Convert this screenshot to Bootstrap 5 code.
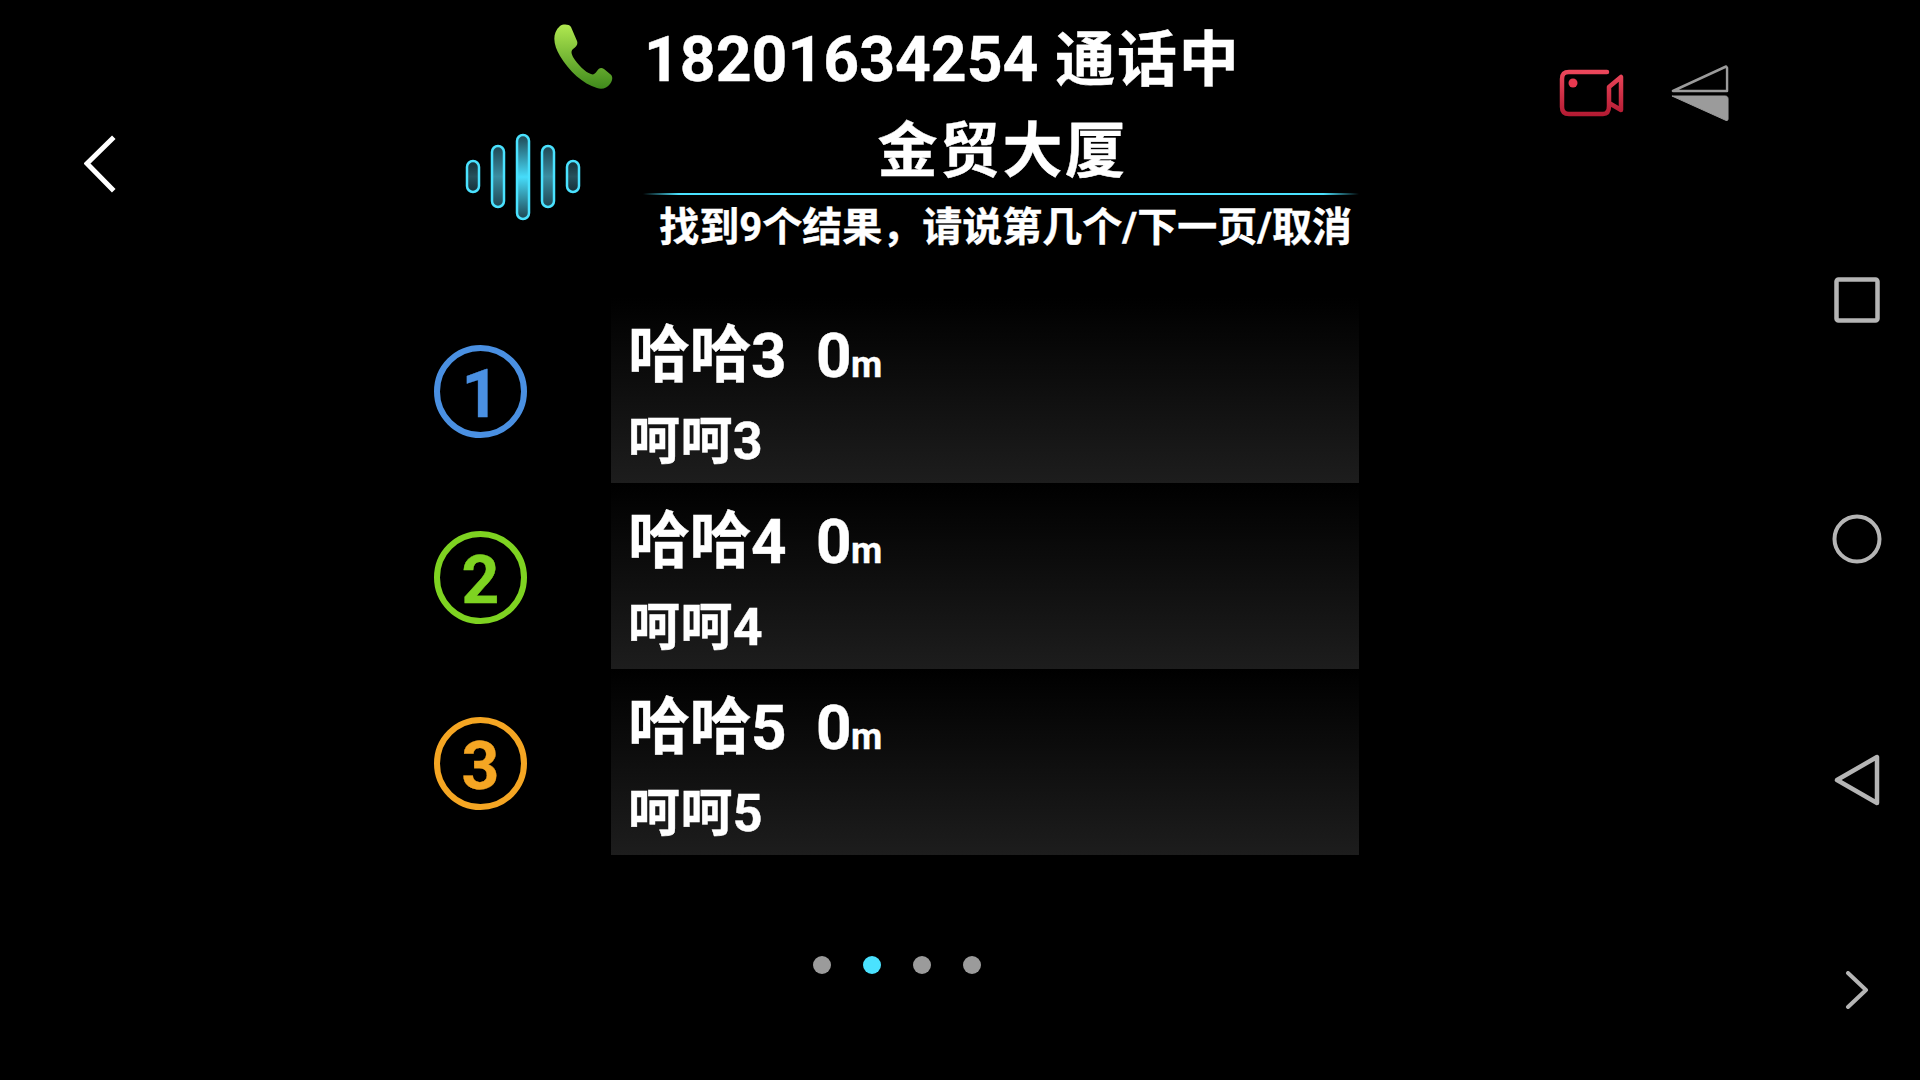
<!DOCTYPE html>
<html lang="zh">
<head>
<meta charset="utf-8">
<title>通话中</title>
<link href="https://cdn.jsdelivr.net/npm/bootstrap@5.3.0/dist/css/bootstrap.min.css" rel="stylesheet">
<style>
html,body{height:1080px;overflow:hidden;background:#000;}
body{font-family:Roboto,"Noto Sans CJK SC",sans-serif;font-weight:700;color:#fff;-webkit-text-stroke:.4px currentColor;}
.stage{width:1920px;height:1080px;background:#000;}
.left-rail{width:430px;padding:135px 0 0 84px;}
.center-col{width:929px;}
.top-line{height:120px;padding-left:123px;font-size:60px;line-height:120px;letter-spacing:1.8px;white-space:pre;}
.top-digits{font-size:62.500px;letter-spacing:0;}
.phone-ico{width:60px;height:66px;margin-right:31px;margin-top:-6px;}
.second-block{height:134px;padding-left:35px;}
.wave-ico{width:116px;height:88px;margin-top:13px;margin-right:64px;}
.info-col{width:712px;margin-top:-3px;}
.place{font-size:60px;line-height:70px;height:76px;text-align:center;letter-spacing:2.500px;padding-left:3px;}
.rule{height:2px;margin:0 -2px;background:linear-gradient(90deg,transparent,#4ae2ff 5%,#4ae2ff 95%,transparent);}
.prompt{font-size:40px;line-height:66px;text-align:right;padding-right:5px;white-space:nowrap;}
.result-list{margin-top:43px;}
.result-row{height:186px;}
.num-ring{width:93px;height:93px;border:6px solid;border-radius:50%;margin-left:4px;margin-right:84px;margin-top:3px;padding-top:6px;font-size:66px;line-height:1;flex:none;}
.ring-blue{color:#4a90e2;}
.ring-green{color:#7ed321;}
.ring-orange{color:#f5a623;}
.result-card{width:748px;height:186px;background:linear-gradient(180deg,#000,#1d1d1d);padding-left:17px;}
.r-title{font-size:62px;line-height:72px;height:72px;margin-top:23px;white-space:pre;letter-spacing:-.5px;}
.r-title small{font-size:36px;font-weight:700;}
.r-sub{font-size:52px;line-height:60px;margin-top:20px;letter-spacing:.4px;}
.pager{margin-top:101px;padding-left:383px;gap:32px;}
.pg-dot{width:18px;height:18px;border-radius:50%;background:#9b9b9b;}
.pg-dot.on{background:#4ae2ff;}
.right-area{flex:1;}
.tools{width:201px;height:120px;padding-top:68px;margin-left:200px;}
.tri-ico{margin-top:-3px;margin-left:46px;}
.nav-rail{width:130px;padding-left:4px;}
.nav-rail svg{display:block;}
</style>
</head>
<body>
<div class="stage d-flex">
  <div class="left-rail">
    <svg width="32" height="58" viewBox="0 0 32 58" fill="none" stroke="#fff" stroke-width="5" stroke-linecap="square" aria-hidden="true"><path d="M28 4 3 28.500 28 54"/></svg>
  </div>
  <div class="center-col">
    <div class="top-line d-flex">
      <svg class="phone-ico align-self-center" viewBox="0 0 60 66" aria-hidden="true"><defs><linearGradient id="pg" x1="0" y1="0" x2="0" y2="1"><stop offset="0" stop-color="#b0e850"/><stop offset="1" stop-color="#3f8a1c"/></linearGradient></defs><path fill="url(#pg)" d="M7 2C10 0 16 0 18 3L24 17C25 20 24 22 20 25C18 27 18 29 20 33C25 41 32 48 38 50C40 51 42 50 44 47C46 44 48 43 51 45L57 50C60 52 60 56 57 60C54 64 49 66 44 64C30 60 16 47 7 32C1 22-2 10 7 2Z"/></svg>
      <span><span class="top-digits">18201634254</span> 通话中</span>
    </div>
    <div class="second-block d-flex">
      <svg class="wave-ico" viewBox="0 0 116 88" aria-hidden="true"><defs><linearGradient id="wa" x1="0" y1="0" x2="0" y2="1"><stop offset="0" stop-color="#153038"/><stop offset=".5" stop-color="#25505c"/><stop offset="1" stop-color="#153038"/></linearGradient><linearGradient id="wb" x1="0" y1="0" x2="0" y2="1"><stop offset="0" stop-color="#1f4652"/><stop offset=".5" stop-color="#3a8ea2"/><stop offset="1" stop-color="#1f4652"/></linearGradient><linearGradient id="wc" x1="0" y1="0" x2="0" y2="1"><stop offset="0" stop-color="#1f4652"/><stop offset=".5" stop-color="#46dcfa"/><stop offset="1" stop-color="#1f4652"/></linearGradient></defs><g stroke="#4ae2ff" stroke-width="2.500"><rect fill="url(#wa)" x="2" y="28" width="12" height="31" rx="6"/><rect fill="url(#wb)" x="27" y="13" width="12" height="61" rx="6"/><rect fill="url(#wc)" x="52" y="2" width="12" height="84" rx="6"/><rect fill="url(#wb)" x="77" y="13" width="12" height="61" rx="6"/><rect fill="url(#wa)" x="102" y="28" width="12" height="31" rx="6"/></g></svg>
      <div class="info-col">
        <div class="place">金贸大厦</div>
        <div class="rule"></div>
        <div class="prompt">找到9个结果，请说第几个/下一页/取消</div>
      </div>
    </div>
    <div class="result-list">
      <div class="result-row d-flex align-items-center">
        <div class="num-ring ring-blue d-flex align-items-center justify-content-center">1</div>
        <div class="result-card"><div class="r-title">哈哈3  0<small>m</small></div><div class="r-sub">呵呵3</div></div>
      </div>
      <div class="result-row d-flex align-items-center">
        <div class="num-ring ring-green d-flex align-items-center justify-content-center">2</div>
        <div class="result-card"><div class="r-title">哈哈4  0<small>m</small></div><div class="r-sub">呵呵4</div></div>
      </div>
      <div class="result-row d-flex align-items-center">
        <div class="num-ring ring-orange d-flex align-items-center justify-content-center">3</div>
        <div class="result-card"><div class="r-title">哈哈5  0<small>m</small></div><div class="r-sub">呵呵5</div></div>
      </div>
    </div>
    <div class="pager d-flex">
      <span class="pg-dot"></span><span class="pg-dot on"></span><span class="pg-dot"></span><span class="pg-dot"></span>
    </div>
  </div>
  <div class="right-area d-flex">
    <div class="tools d-flex">
      <svg width="66" height="50" viewBox="0 0 66 50" fill="none" aria-hidden="true"><defs><linearGradient id="vg" gradientUnits="userSpaceOnUse" x1="0" y1="0" x2="0" y2="50"><stop offset="0" stop-color="#f04a5e"/><stop offset="1" stop-color="#b01830"/></linearGradient></defs><path stroke="url(#vg)" stroke-width="4.500" stroke-linecap="round" stroke-linejoin="round" d="M48 4H10C5 4 3 6 3 11V39C3 43 5 46 10 46H44C48 46 50 43 50 38V19L62 9V42L50 35"/><circle cx="14" cy="15" r="4.500" fill="#e8384f"/></svg>
      <svg class="tri-ico" width="58" height="56" viewBox="0 0 60 56" preserveAspectRatio="none" aria-hidden="true"><path fill="none" stroke="#9b9b9b" stroke-width="2.500" stroke-linejoin="round" d="M57 1.500 2 26H58V3Z"/><path fill="#9b9b9b" stroke="#9b9b9b" stroke-width="1" stroke-linejoin="round" d="M1 31H56C58 31 59 32 59 34V54C59 56 57 56 56 55Z"/></svg>
    </div>
  </div>
  <div class="nav-rail d-flex flex-column align-items-center position-relative">
    <svg style="margin-top:277px" width="46" height="46" viewBox="0 0 46 46" fill="none" stroke="#b5b5b5" stroke-width="4.500" stroke-linejoin="round" aria-hidden="true"><rect x="2.500" y="2.500" width="41" height="41" rx="2"/></svg>
    <svg style="margin-top:191px" width="50" height="50" viewBox="0 0 50 50" fill="none" stroke="#b5b5b5" stroke-width="4" aria-hidden="true"><circle cx="25" cy="25" r="22.500"/></svg>
    <svg style="margin-top:190px" width="46" height="52" viewBox="0 0 46 52" fill="none" stroke="#b5b5b5" stroke-width="4.500" stroke-linejoin="round" aria-hidden="true"><path d="M3 26 43 3V49Z"/></svg>
    <svg style="margin-top:165px" width="24" height="38" viewBox="0 0 24 38" fill="none" stroke="#b5b5b5" stroke-width="4" stroke-linecap="round" stroke-linejoin="round" aria-hidden="true"><path d="M3 2 21 19 3 36"/></svg>
  </div>
</div>
<script src="https://cdn.jsdelivr.net/npm/bootstrap@5.3.0/dist/js/bootstrap.bundle.min.js"></script>
</body>
</html>
